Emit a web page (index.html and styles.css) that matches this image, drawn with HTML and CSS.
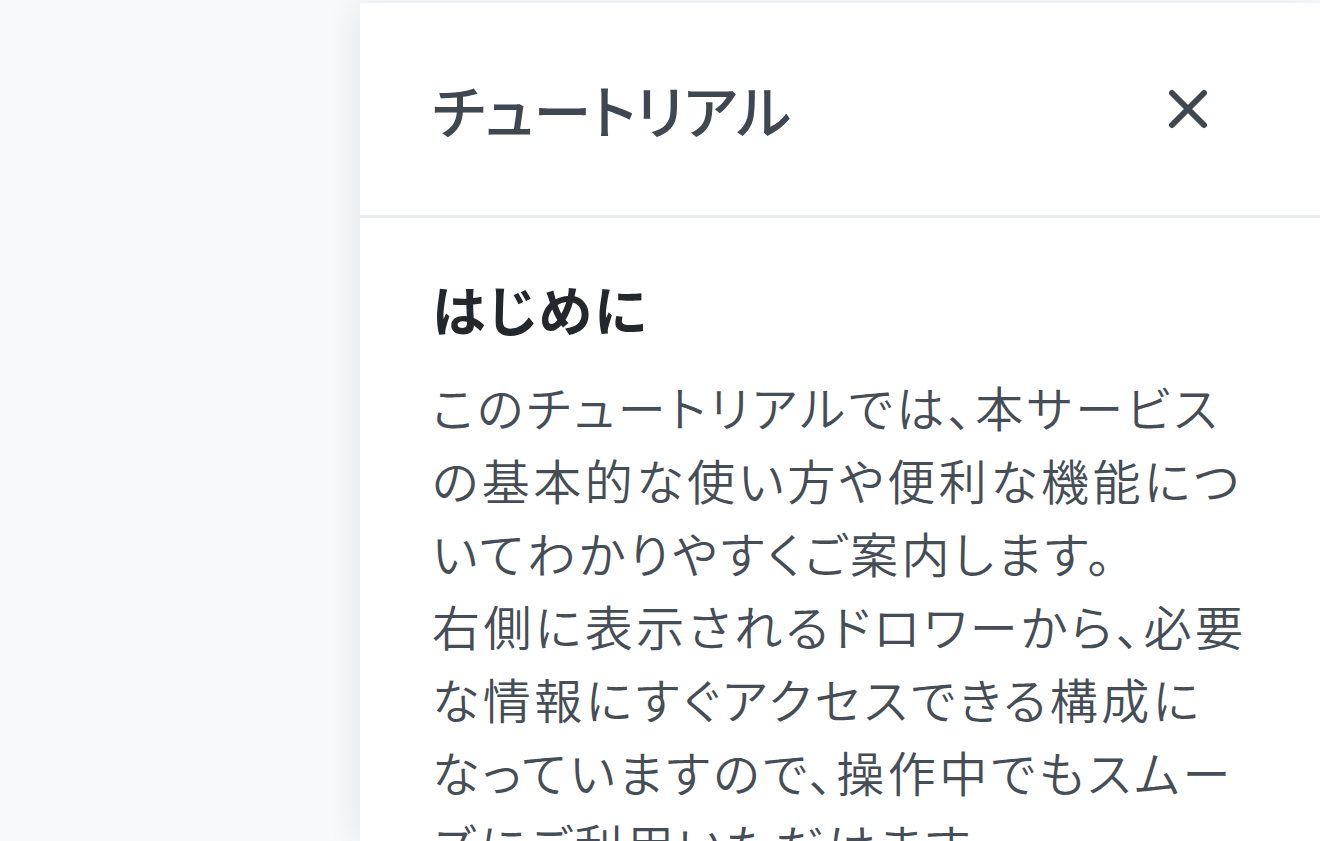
FILE: index.html
```html
<!DOCTYPE html>
<html lang="ja">
<head>
<meta charset="utf-8">
<title>チュートリアル</title>
<link rel="stylesheet" href="styles.css">
</head>
<body>
<div class="page">
  <div class="backdrop"></div>
  <aside class="drawer">
    <header class="drawer-header">
      <h2 class="drawer-title">チュートリアル</h2>
      <button class="close-btn" aria-label="閉じる">
        <svg viewBox="0 0 48 48" width="48" height="48"><path d="M8 8 L40 40 M40 8 L8 40" fill="none" stroke="currentColor" stroke-width="6" stroke-linecap="round"/></svg>
      </button>
    </header>
    <div class="drawer-body">
      <h3 class="section-title">はじめに</h3>
      <p class="section-text">このチュートリアルでは、本サービスの基本的な使い方や便利な機能についてわかりやすくご案内します。<br>右側に表示されるドロワーから、必要な情報にすぐアクセスできる構成になっていますので、操作中でもスムーズにご利用いただけます。</p>
    </div>
  </aside>
</div>
</body>
</html>
```

FILE: styles.css
```css
html, body {
  margin: 0;
  padding: 0;
  height: 100%;
  overflow: hidden;
}
body {
  background: #f8f9fa;
  font-family: "Noto Sans CJK JP", "Noto Sans", sans-serif;
}
.page {
  display: flex;
  height: 100%;
  padding-top: 3px;
  box-sizing: border-box;
  background: #f8f9fa;
}
.backdrop {
  width: 360px;
  flex: none;
  background: #f8f9fa;
}
.drawer {
  flex: 1;
  min-width: 0;
  background: #ffffff;
  box-shadow: -6px 0 28px rgba(0, 0, 0, 0.07);
  display: flex;
  flex-direction: column;
}
.drawer-header {
  flex: none;
  height: 215px;
  box-sizing: border-box;
  padding: 0 72px;
  display: flex;
  align-items: center;
  justify-content: space-between;
  border-bottom: 3px solid #e9ecef;
}
.drawer-title {
  margin: 0;
  font-size: 58px;
  font-weight: 500;
  color: #3f4751;
  font-feature-settings: "palt";
}
.close-btn {
  border: 0;
  background: transparent;
  padding: 0;
  margin-right: 36px;
  color: #3f4751;
  width: 48px;
  height: 48px;
  display: flex;
  align-items: center;
  justify-content: center;
}
.drawer-body {
  flex: none;
  padding: 50px 72px 0;
}
.section-title {
  margin: 0 0 21px;
  font-size: 54px;
  font-weight: 600;
  color: #24282d;
  line-height: 1.5;
  font-feature-settings: "palt";
  letter-spacing: 0.04em;
}
.section-text {
  margin: 0;
  width: 816px;
  font-size: 48px;
  font-weight: 350;
  line-height: 73px;
  color: #454d56;
  font-feature-settings: "palt";
  letter-spacing: 3.5px;
}
```
